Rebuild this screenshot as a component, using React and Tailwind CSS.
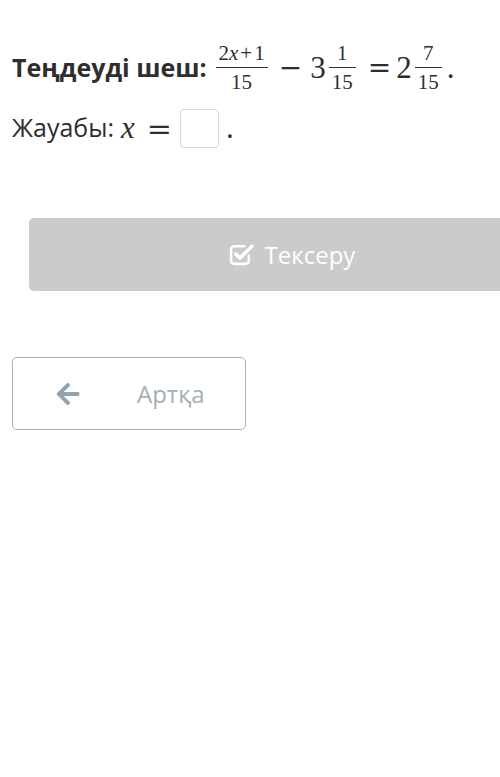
import { FaArrowLeft } from 'react-icons/fa';

const serif = { fontFamily: '"Liberation Serif", "DejaVu Serif", serif' };
const op = { fontFamily: '"DejaVu Serif", serif' };

function Frac({ num, den, className = '' }) {
  return (
    <span className={`inline-flex flex-col items-center text-[21px] leading-none ${className}`}>
      <span className="px-[3px] pb-[3px]">{num}</span>
      <span className="h-[1.5px] w-full bg-[#333]" />
      <span className="px-[3px] pt-[4px]">{den}</span>
    </span>
  );
}

function CheckSquare() {
  return (
    <svg viewBox="0 0 24 22" className="h-[23px] w-[25px]" fill="none" stroke="white">
      <path d="M15 3H5a3 3 0 0 0-3 3v11a3 3 0 0 0 3 3h11a3 3 0 0 0 3-3v-5" strokeWidth="2.4" strokeLinecap="round" />
      <path d="M6.5 10.5l4 4L22 3" strokeWidth="3.4" strokeLinecap="round" strokeLinejoin="round" />
    </svg>
  );
}

export default function App() {
  return (
    <div className="h-[777px] w-[500px] overflow-hidden bg-white text-[#2e2e2e]" style={{ fontFamily: '"Open Sans", sans-serif' }}>
      <div className="pl-[12px] pt-[40px]">
        <div className="flex h-[56px] items-center">
          <span className="mr-[9px] text-[25px] font-bold">Теңдеуді шеш:</span>
          <span className="flex items-center text-[31px]" style={serif}>
            <Frac num={<><span>2</span><i>x</i><span className="mx-[2px]">+</span><span>1</span></>} den="15" />
            <span className="ml-[11px] mr-[8px] text-[28px]" style={op}>−</span>
            <span>3</span>
            <Frac num="1" den="15" className="ml-[3px]" />
            <span className="ml-[12px] mr-[5px] text-[28px]" style={op}>=</span>
            <span>2</span>
            <Frac num="7" den="15" className="ml-[3px]" />
            <span className="ml-[5px]">.</span>
          </span>
        </div>
        <div className="mt-[4px] flex h-[56px] items-center">
          <span className="mr-[7px] text-[25px]">Жауабы:</span>
          <span className="flex items-center text-[31px]" style={serif}>
            <i>x</i>
            <span className="ml-[12px] mr-[8px] text-[30px]" style={op}>=</span>
            <span className="h-[39px] w-[39px] rounded-[4px] border border-[#d6dadc]" />
            <span className="ml-[7px]">.</span>
          </span>
        </div>
      </div>
      <div className="ml-[29px] mt-[62px] flex h-[73px] w-[526px] items-center justify-center gap-[11px] rounded-[5px] bg-[#cbcbcb] text-[24px] text-white">
        <CheckSquare />
        <span>Тексеру</span>
      </div>
      <div className="ml-[12px] mt-[66px] flex h-[73px] w-[234px] items-center rounded-[5px] border border-[#a9b5bb] text-[24px] text-[#9fb0b9]">
        <FaArrowLeft className="ml-[42px] h-[26px] w-[26px] text-[#8ea4b0]" />
        <span className="ml-[56px]">Артқа</span>
      </div>
    </div>
  );
}
